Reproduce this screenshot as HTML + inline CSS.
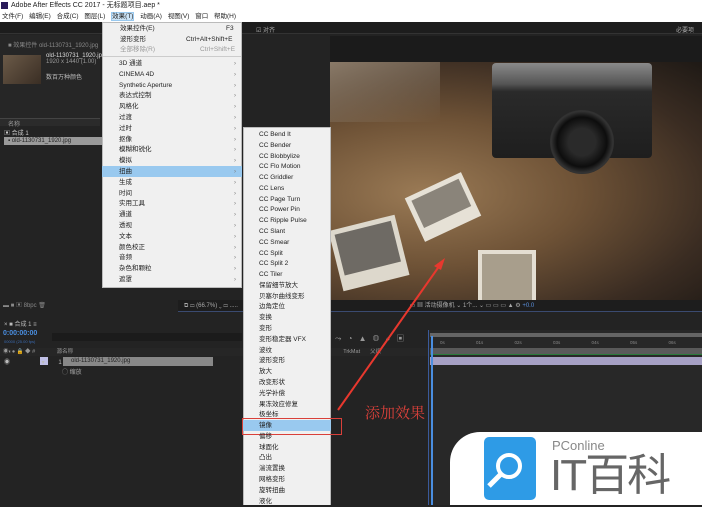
<!DOCTYPE html>
<html><head><meta charset="utf-8"><style>
*{margin:0;padding:0;box-sizing:border-box}
body{width:702px;height:505px;overflow:hidden;background:#232323;position:relative;font-family:"Liberation Sans","Noto Sans CJK SC",sans-serif;font-size:7px;color:#aaa}
.a{position:absolute}
.m{position:absolute;background:#f0f0f0;color:#222;border:1px solid #bbb}
.m div{position:absolute;white-space:nowrap;font-size:6.5px;line-height:10px}
</style></head><body>
<div class="a" style="left:0;top:0;width:702px;height:11px;background:#fff;color:#222;font-size:7px;line-height:11px;padding-left:11px">Adobe After Effects CC 2017 - 无标题项目.aep *</div>
<div class="a" style="left:1px;top:2px;width:7px;height:7px;background:#2a1a5a"></div>
<div class="a" style="left:0;top:11px;width:702px;height:11px;background:#fff;color:#222;font-size:6.5px;line-height:11px;padding-left:2px;word-spacing:4px">文件(F) 编辑(E) 合成(C) 图层(L) <span style="background:#cce4f7;border:1px solid #99c9ef">效果(T)</span> 动画(A) 视图(V) 窗口 帮助(H)</div>
<div class="a" style="left:0;top:22px;width:702px;height:12px;background:#1d1d1d;border-bottom:1px solid #333"></div>
<div class="a" style="left:256px;top:25px;color:#aaa;font-size:6px">☑ 对齐</div>
<div class="a" style="left:676px;top:25px;color:#aaa;font-size:6px">必要项</div>
<div class="a" style="left:0;top:35px;width:100px;height:88px;background:#262626"></div>
<div class="a" style="left:8px;top:40px;font-size:6px;color:#888">■ 效果控件 old-1130731_1920.jpg</div>
<div class="a" style="left:3px;top:55px;width:38px;height:29px;background:linear-gradient(135deg,#6b5a48,#3a2e24)"></div>
<div class="a" style="left:46px;top:53px;font-size:6px;color:#ddd">old-1130731_1920.jpg<br><span style="color:#999">1920 x 1440 (1.00)</span></div>
<div class="a" style="left:46px;top:72px;font-size:6px;color:#bbb">数百万种颜色</div>
<div class="a" style="left:0;top:118px;width:100px;height:8px;background:#2b2b2b;border-top:1px solid #444"></div>
<div class="a" style="left:8px;top:119px;font-size:6px;color:#999">名称</div>
<div class="a" style="left:4px;top:128px;font-size:6px;color:#ccc">▣ 合成 1</div>
<div class="a" style="left:4px;top:137px;width:98px;height:8px;background:#9a9a9a;color:#222;font-size:6px;line-height:8px;padding-left:4px">▪ old-1130731_1920.jpg</div>
<!-- viewer -->
<div class="a" style="left:330px;top:36px;width:372px;height:26px;background:#1b1b1b"></div>
<div class="a" style="left:330px;top:62px;width:372px;height:238px;background:radial-gradient(ellipse at 25% 55%,#9a7a55 0%,#6e5236 40%,#3a2c22 75%,#1e1915 100%)"></div>
<div class="a" style="left:330px;top:62px;width:110px;height:60px;background:linear-gradient(160deg,#8a7a68,transparent)"></div>
<div class="a" style="left:492px;top:63px;width:160px;height:95px;background:linear-gradient(#8a8a8a,#555 22%,#2a2a2a 30%,#1e1e1e);border-radius:4px"></div>
<div class="a" style="left:550px;top:110px;width:64px;height:64px;border-radius:50%;background:radial-gradient(circle,#2a2a2a 30%,#0d0d0d 55%,#333 68%,#0e0e0e)"></div>
<div class="a" style="left:412px;top:183px;width:62px;height:48px;background:#e6e1d6;transform:rotate(-25deg)"><div style="margin:5px;height:30px;background:#8a847a"></div></div>
<div class="a" style="left:335px;top:222px;width:68px;height:62px;background:#ddd8cc;transform:rotate(-14deg)"><div style="margin:5px;height:42px;background:#6e6a64"></div></div>
<div class="a" style="left:478px;top:250px;width:58px;height:50px;background:#e4ded2"><div style="margin:4px;height:46px;background:#a89e8c"></div></div>
<div class="a" style="left:178px;top:300px;width:524px;height:12px;background:#1d1d1d;border-bottom:1px solid #3a4a70;font-size:6px;color:#aaa;line-height:12px;padding-left:6px">⧉ ▭ (66.7%) ⌄ ▭ ..... <span style="margin-left:170px">▭ ▦ 活动摄像机 ⌄ 1个... ⌄ ▭ ▭ ▭ ▲ ⚙ <span style="color:#5a8fdc">+0.0</span></span></div>
<div class="a" style="left:0;top:300px;width:178px;height:12px;background:#232323;font-size:6px;color:#888;line-height:12px;padding-left:3px">▬ ■ ▣ 8bpc 🗑</div>
<!-- timeline -->
<div class="a" style="left:0;top:315px;width:702px;height:190px;background:#232323"></div>
<div class="a" style="left:4px;top:319px;font-size:6px;color:#bbb">× ■ 合成 1 ≡</div>
<div class="a" style="left:3px;top:330px;font-size:7px;color:#4a8ee0;font-weight:bold">0:00:00:00</div>
<div class="a" style="left:4px;top:339px;font-size:4px;color:#3a6ab0">00000 (25.00 fps)</div>
<div class="a" style="left:52px;top:333px;width:190px;height:8px;background:#1b1b1b"></div>
<div class="a" style="left:0;top:348px;width:428px;height:8px;background:#262626;font-size:5.5px;color:#999;line-height:8px;padding-left:3px">◉◐● 🔒 ◆ # <span style="margin-left:20px">源名称</span><span style="margin-left:270px">TrkMat</span><span style="margin-left:10px">父级</span></div>
<div class="a" style="left:63px;top:357px;width:150px;height:9px;background:#888;font-size:6px;color:#222;line-height:9px;padding-left:8px">old-1130731_1920.jpg</div>
<div class="a" style="left:40px;top:357px;width:8px;height:8px;background:#c0c0e6"></div>
<div class="a" style="left:4px;top:357px;font-size:6px;color:#bbb">◉ <span style="margin-left:30px">▾ </span><span style="margin-left:12px">1</span></div>
<div class="a" style="left:62px;top:367px;font-size:6px;color:#aaa">◯ 缩放</div>
<div class="a" style="left:428px;top:330px;width:274px;height:175px;background:#282828;border-left:1px solid #3a5a9a"></div>
<div class="a" style="left:430px;top:333px;width:272px;height:4px;background:#666"></div>
<div class="a" style="left:430px;top:338px;width:272px;height:10px;font-size:4.5px;color:#888;word-spacing:30px;padding-left:10px;line-height:10px">0s 01s 02s 03s 04s 05s 06s</div>
<div class="a" style="left:430px;top:348px;width:272px;height:7px;background:#5a5a5a;border-bottom:1px solid #2a7a3a"></div>
<div class="a" style="left:430px;top:357px;width:272px;height:8px;background:#a6a0c4"></div>
<div class="a" style="left:431px;top:336px;width:2px;height:169px;background:#4a8ee0"></div>
<div class="a" style="left:335px;top:333px;font-size:8px;color:#999;word-spacing:4px">⤳ ◔ ▲ ◍ ◕ ▣</div>
<!-- main menu -->
<div class="m" style="left:102px;top:22px;width:140px;height:266px">
<div style="left:17px;top:1px">效果控件(E)</div><div style="left:123px;top:1px">F3</div>
<div style="left:17px;top:12px">波形变形</div><div style="left:83px;top:12px">Ctrl+Alt+Shift+E</div>
<div style="left:17px;top:22px;color:#999">全部移除(R)</div><div style="left:97px;top:22px;color:#999">Ctrl+Shift+E</div>
</div>
<div class="a" style="left:103px;top:56px;width:138px;height:1px;background:#ccc"></div>
<div class="a" style="left:102px;top:166px;width:140px;height:11px;background:#99c9ef"></div>
<div id="mm"></div>
<div class="m" style="left:243px;top:127px;width:88px;height:378px;border-bottom:none"></div>
<div class="a" style="left:243px;top:420px;width:88px;height:11px;background:#99c9ef"></div>
<div class="a" style="left:242px;top:418px;width:100px;height:17px;border:1.5px solid #d9403a"></div>
<div id="sm"></div>
<svg class="a" style="left:0;top:0" width="702" height="505"><line x1="338" y1="410" x2="440" y2="265" stroke="#e8382e" stroke-width="2"/><polygon points="445,258 434,266 441,270" fill="#e8382e"/></svg>
<div class="a" style="left:365px;top:402px;font-size:15px;color:#d9403a;font-family:'Noto Serif CJK SC',serif">添加效果</div>
<!-- logo -->
<div class="a" style="left:450px;top:432px;width:252px;height:73px;background:#fff;border-top-left-radius:30px"></div>
<div class="a" style="left:484px;top:437px;width:52px;height:63px;background:#2e9be6;border-radius:5px"></div>
<svg class="a" style="left:484px;top:437px" width="54" height="63"><circle cx="25" cy="29" r="11" fill="none" stroke="#fff" stroke-width="4"/><line x1="17" y1="37" x2="5" y2="49" stroke="#fff" stroke-width="5"/><rect x="49" y="5" width="3" height="53" fill="#2e9be6"/></svg>
<div class="a" style="left:552px;top:438px;font-size:13px;color:#888">PConline</div>
<div class="a" style="left:550px;top:452px;font-size:44px;line-height:48px;color:#666;letter-spacing:-2px">IT百科</div>
<script>
var a=["3D 通道","CINEMA 4D","Synthetic Aperture","表达式控制","风格化","过渡","过时","抠像","模糊和锐化","模拟","扭曲","生成","时间","实用工具","通道","透视","文本","颜色校正","音频","杂色和颗粒","遮罩"],h="";
a.forEach(function(t,i){var y=59+i*10.8;h+='<div class="a" style="left:119px;top:'+y+'px;font-size:6.5px;line-height:10px;color:#222;white-space:nowrap">'+t+'</div><div class="a" style="left:234px;top:'+y+'px;font-size:6px;line-height:10px;color:#777">›</div>'});
document.getElementById("mm").innerHTML=h;
var b=["CC Bend It","CC Bender","CC Blobbylize","CC Flo Motion","CC Griddler","CC Lens","CC Page Turn","CC Power Pin","CC Ripple Pulse","CC Slant","CC Smear","CC Split","CC Split 2","CC Tiler","保留细节放大","贝塞尔曲线变形","边角定位","变换","变形","变形稳定器 VFX","波纹","波形变形","放大","改变形状","光学补偿","果冻效应修复","极坐标","镜像","偏移","球面化","凸出","湍流置换","网格变形","旋转扭曲","液化"];h="";
b.forEach(function(t,i){var y=130+i*10.78;h+='<div class="a" style="left:259px;top:'+y+'px;font-size:6.5px;line-height:10px;color:#222;white-space:nowrap">'+t+'</div>'});
document.getElementById("sm").innerHTML=h;
</script>
</body></html>
